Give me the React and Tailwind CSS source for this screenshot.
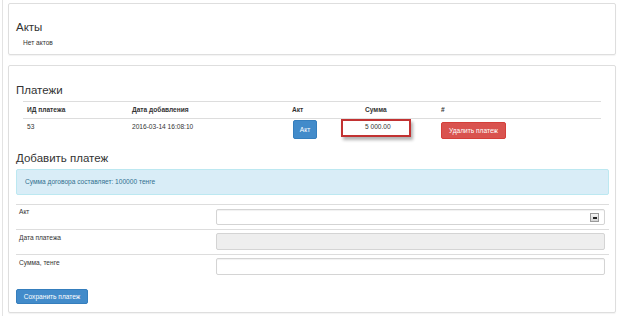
export default function App() {
  return (
    <div className="w-[624px] h-[316px] bg-white overflow-hidden font-['Liberation_Sans',Arial,sans-serif] text-[#333]">
      <div className="ml-[2px] h-full border-l border-[#e3e3e3] pl-[5px] pt-[3px]">
        {/* Акты panel */}
        <div className="w-[608px] h-[52px] border border-[#dedede] rounded-[2px] shadow-[0_1px_1px_rgba(0,0,0,0.05)] pl-[7px] pt-[17px]">
          <h3 className="text-[11.5px] leading-[13px] font-normal">Акты</h3>
          <p className="ml-[7px] mt-[5px] text-[6.6px] leading-[8px]">Нет актов</p>
        </div>

        {/* Платежи panel */}
        <div className="mt-[10px] w-[608px] h-[248px] border border-[#dedede] rounded-[2px] shadow-[0_1px_1px_rgba(0,0,0,0.05)] px-[7px] pt-[18px]">
          <h3 className="text-[11.5px] leading-[13px] font-normal">Платежи</h3>

          <div className="mt-[4px] mx-[7px] w-[578px] text-[6.6px] leading-[8px]">
            <div className="grid grid-cols-[105px_160px_73px_76px_1fr] h-[17px] items-center border-t border-[#dddddd] font-bold">
              <div className="px-[4px]">ИД платежа</div>
              <div className="px-[4px]">Дата добавления</div>
              <div className="px-[4px]">Акт</div>
              <div className="px-[4px]">Сумма</div>
              <div className="px-[4px]">#</div>
            </div>
            <div className="grid grid-cols-[105px_160px_73px_76px_1fr] h-[22px] items-start border-t border-[#dddddd]">
              <div className="px-[4px] pt-[4px]">53</div>
              <div className="px-[4px] pt-[4px]">2016-03-14 16:08:10</div>
              <div className="px-[4px] pt-[1px]">
                <button className="ml-[1px] w-[24px] h-[19px] flex items-center justify-center rounded-[2px] bg-[#428bca] border border-[#357ebd] text-white text-[6.6px]">
                  Акт
                </button>
              </div>
              <div className="relative px-[4px] pt-[4px]">
                <div className="absolute left-[-20px] top-0 w-[70px] h-[18px] border-2 border-[#c23232] shadow-[2px_3px_3px_rgba(0,0,0,0.3)]"></div>
                5 000.00
              </div>
              <div className="px-[4px] pt-[3px]">
                <button className="w-[65px] h-[17px] flex items-center justify-center rounded-[2px] bg-[#d9534f] border border-[#d43f3a] text-white text-[6.6px]">
                  Удалить платеж
                </button>
              </div>
            </div>
          </div>

          <h3 className="mt-[12px] text-[11.5px] leading-[13px] font-normal">Добавить платеж</h3>

          <div className="mt-[4px] w-[593px] h-[26px] bg-[#d9edf7] border border-[#bce8f1] rounded-[2px] pl-[8px] flex items-center text-[#31708f] text-[6.6px] leading-[8px]">
            Сумма договора составляет: 100000 тенге
          </div>

          <div className="mt-[9px] w-[593px] text-[6.6px] leading-[8px]">
            <div className="h-[25px] border-t border-[#dddddd] flex">
              <div className="w-[200px] pl-[3px] pt-[3px]">Акт</div>
              <div className="relative mt-[4px] w-[389px] h-[16px] border border-[#d4d4d4] rounded-[2px] bg-white shadow-[inset_0_1px_1px_rgba(0,0,0,0.06)]">
                <div className="absolute right-[5px] top-[3px] w-[9px] h-[9px] border border-[#9a9a9a] bg-gradient-to-b from-[#f6f6f6] to-[#d4d4d4] flex items-center justify-center">
                  <div className="w-[4px] h-[2px] bg-[#222]"></div>
                </div>
              </div>
            </div>
            <div className="h-[25px] border-t border-[#dddddd] flex">
              <div className="w-[200px] pl-[3px] pt-[4px]">Дата платежа</div>
              <div className="mt-[3px] w-[389px] h-[17px] border border-[#d4d4d4] rounded-[2px] bg-[#eeeeee]"></div>
            </div>
            <div className="h-[25px] border-t border-[#dddddd] flex">
              <div className="w-[200px] pl-[3px] pt-[4px]">Сумма, тенге</div>
              <div className="mt-[3px] w-[389px] h-[17px] border border-[#d4d4d4] rounded-[2px] bg-white shadow-[inset_0_1px_1px_rgba(0,0,0,0.06)]"></div>
            </div>
          </div>

          <button className="mt-[10px] w-[72px] h-[15px] flex items-center justify-center rounded-[2px] bg-[#428bca] border border-[#357ebd] text-white text-[6.6px]">
            Сохранить платеж
          </button>
        </div>
      </div>
    </div>
  );
}
